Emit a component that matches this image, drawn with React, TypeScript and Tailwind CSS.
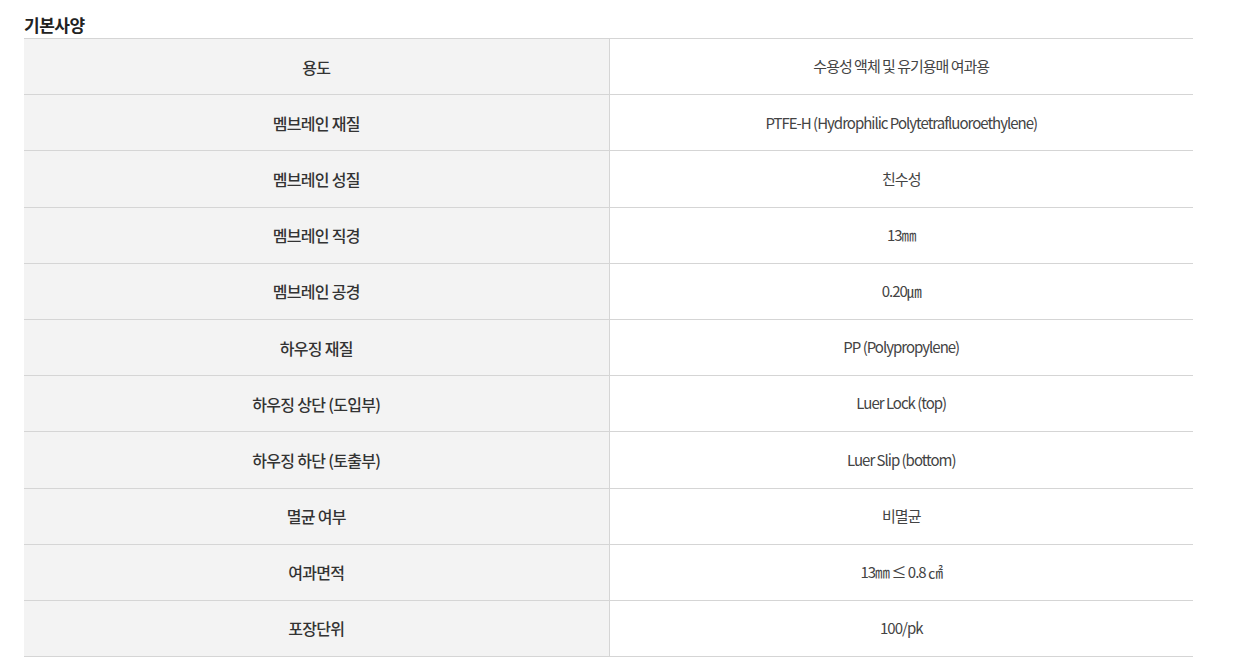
const specs: [string, string][] = [
  ['용도', '수용성 액체 및 유기용매 여과용'],
  ['멤브레인 재질', 'PTFE-H (Hydrophilic Polytetrafluoroethylene)'],
  ['멤브레인 성질', '친수성'],
  ['멤브레인 직경', '13㎜'],
  ['멤브레인 공경', '0.20㎛'],
  ['하우징 재질', 'PP (Polypropylene)'],
  ['하우징 상단 (도입부)', 'Luer Lock (top)'],
  ['하우징 하단 (토출부)', 'Luer Slip (bottom)'],
  ['멸균 여부', '비멸균'],
  ['여과면적', '13㎜ ≤ 0.8 ㎠'],
  ['포장단위', '100/pk'],
];

export default function App() {
  return (
    <div
      className="bg-white pl-6 pt-[13px] w-[1193px]"
      style={{ fontFamily: '"Noto Sans CJK KR", "Noto Sans", sans-serif' }}
    >
      <h3 className="text-[17px] font-bold text-[#222] leading-[24px] tracking-[-0.5px] mb-[1px]">기본사양</h3>
      <table className="w-full border-collapse border-t border-[#d5d5d5]">
        <tbody>
          {specs.map(([label, value]) => (
            <tr key={label} className="border-b border-[#d5d5d5] h-[56.2px]">
              <th className="w-[585px] bg-[#f3f3f3] border-r border-[#d5d5d5] font-medium text-[#333] text-center text-[16px] tracking-[-0.7px]">
                {label}
              </th>
              <td className="text-center text-[#444] font-normal text-[15px] tracking-[-1px]">{value}</td>
            </tr>
          ))}
        </tbody>
      </table>
    </div>
  );
}
